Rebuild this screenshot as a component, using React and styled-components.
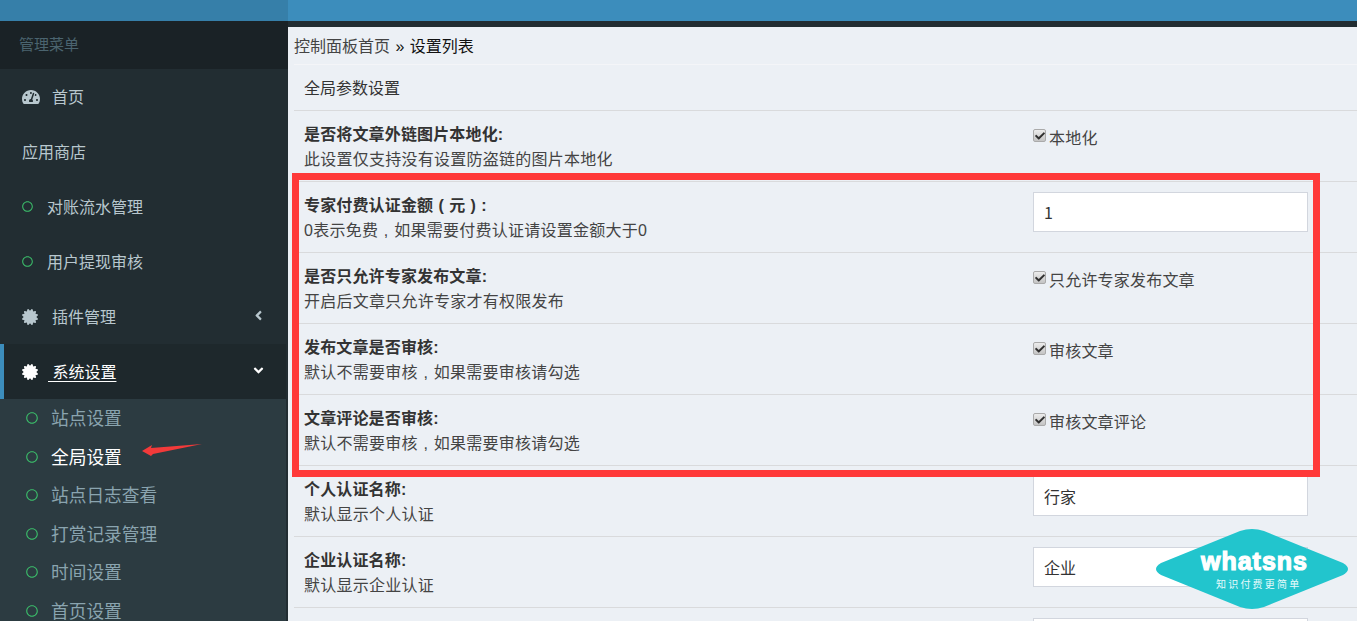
import React from "react";
import styled, { createGlobalStyle } from "styled-components";
import { FaTachometerAlt, FaCertificate, FaRegCircle, FaAngleLeft, FaAngleDown, FaCheck } from "react-icons/fa";

const FONT = `"Liberation Sans", "Noto Sans CJK SC", sans-serif`;

const Global = createGlobalStyle`
  html, body { margin: 0; padding: 0; height: 621px; overflow: hidden; background: #ecf0f5; }
  * { box-sizing: border-box; }
  body { font-family: ${FONT}; font-size: 16px; color: #333; }
`;

const Page = styled.div`
  position: relative;
  display: grid;
  grid-template-columns: 288px 1fr;
  width: 1357px;
  height: 621px;
  overflow: hidden;
`;

const Sidebar = styled.aside`
  background: #222d32;
  height: 621px;
  overflow: hidden;
`;
const Brand = styled.div`
  height: 21px;
  background: #367fa9;
`;
const MenuHeader = styled.div`
  height: 48px;
  background: #1a2226;
  color: #4b646f;
  font-size: 15px;
  line-height: 48px;
  padding-left: 19px;
`;
const MenuItem = styled.div`
  display: flex;
  align-items: center;
  height: 55px;
  padding-left: ${p => p.$pad || 22}px;
  padding-right: ${p => (p.$active ? 12 : 14)}px;
  color: ${p => (p.$active ? "#fff" : "#b8c7ce")};
  background: ${p => (p.$active ? "#1e282c" : "transparent")};
  border-left: ${p => (p.$active ? "4px solid #3c8dbc" : "none")};
  width: ${p => (p.$active ? "286px" : "100%")};
  font-size: 16px;
`;
const Glyph = styled.span`
  display: inline-flex;
  width: ${p => p.$w || 30}px;
  flex: none;
  font-size: ${p => p.$size || 16}px;
  color: ${p => p.$color || "inherit"};
`;
const MenuLabel = styled.span`
  flex: 1;
  margin-top: -2px;
  text-decoration: ${p => (p.$underline ? "underline" : "none")};
  text-underline-offset: 3px;
  white-space: pre;
`;
const Caret = styled.span`
  display: inline-flex;
  font-size: 15px;
  margin-top: -3px;
  margin-right: 8px;
`;
const Submenu = styled.div`
  background: #2c3b41;
  width: 286px;
  padding-left: 1px;
`;
const SubItem = styled.div`
  display: flex;
  align-items: center;
  height: 38.5px;
  padding-left: 25px;
  font-size: 17.7px;
  color: ${p => (p.$active ? "#fff" : "#8aa4af")};
`;
const SubLabel = styled.span`
  margin-top: -2px;
`;

const Main = styled.main`
  display: flex;
  flex-direction: column;
  background: #ecf0f5;
  min-width: 0;
`;
const TopBar = styled.div`
  height: 21px;
  background: #3c8dbc;
  flex: none;
`;
const TopEdge = styled.div`
  height: 6px;
  background: #222d32;
  flex: none;
`;
const Breadcrumb = styled.div`
  height: 38px;
  margin-left: 6px;
  flex: none;
  font-size: 16px;
  line-height: 40px;
  color: #111;
  border-bottom: 1px solid #f4f5f8;
`;
const CrumbLink = styled.span`
  color: #444;
`;
const CrumbSep = styled.span`
  margin: 0 1px;
`;
const SectionTitle = styled.div`
  height: 46px;
  margin-left: 6px;
  padding-left: 10px;
  flex: none;
  font-size: 16px;
  line-height: 47px;
  color: #333;
  border-bottom: 1px solid #d9dadc;
`;
const Row = styled.div`
  display: grid;
  grid-template-columns: 729px 275px;
  flex: none;
  height: 71px;
  margin-left: 6px;
  padding-left: 10px;
  border-bottom: 1px solid #d9dadc;
`;
const Info = styled.div`
  padding-top: 11px;
`;
const Title = styled.div`
  font-size: 16px;
  line-height: 25px;
  font-weight: 700;
  color: #333;
  letter-spacing: 0.15px;
`;
const Hint = styled.div`
  font-size: 16px;
  line-height: 25px;
  color: #444;
  letter-spacing: 0.25px;
`;
const Cell = styled.span`
  display: inline-block;
  width: 1em;
  text-align: center;
`;
const Control = styled.div`
  padding-top: 10px;
`;
const TextInput = styled.input`
  display: block;
  width: 275px;
  height: 40px;
  padding: 0 10px;
  background: #fff;
  border: 1px solid #d2d6de;
  border-radius: 0;
  outline: none;
  font-family: "Noto Sans CJK SC", "Liberation Sans", sans-serif;
  font-size: 16px;
  color: #333;
`;
const CheckLabel = styled.label`
  display: flex;
  align-items: flex-start;
  padding-top: 6px;
  font-size: 16px;
  line-height: 24px;
  color: #444;
  letter-spacing: 0.2px;
`;
const Box = styled.span`
  display: inline-flex;
  align-items: center;
  justify-content: center;
  width: 13px;
  height: 13px;
  margin: 2px 3px 0 0;
  border: 1px solid #aaa;
  border-radius: 2px;
  background: linear-gradient(#ececec, #c4c4c4);
  color: #2f2f2f;
  font-size: 10px;
`;

const Annotation = styled.div`
  position: absolute;
  left: 292px;
  top: 173px;
  width: 1028px;
  height: 304px;
  border: 7px solid #ff3939;
  pointer-events: none;
`;
const ArrowMark = styled.svg`
  position: absolute;
  left: 140px;
  top: 442px;
  width: 64px;
  height: 16px;
`;
const Logo = styled.svg`
  position: absolute;
  left: 1150px;
  top: 525px;
  width: 204px;
  height: 90px;
`;

const Check = ({ children }) => (
  <CheckLabel>
    <Box><FaCheck /></Box>
    {children}
  </CheckLabel>
);

const rows = [
  ["是否将文章外链图片本地化:", "此设置仅支持没有设置防盗链的图片本地化", { check: "本地化" }],
  [<>专家付费认证金额<Cell>(</Cell>元<Cell>)</Cell>:</>, <>0表示免费<Cell>,</Cell>如果需要付费认证请设置金额大于0</>, { input: "1" }],
  ["是否只允许专家发布文章:", "开启后文章只允许专家才有权限发布", { check: "只允许专家发布文章" }],
  ["发布文章是否审核:", <>默认不需要审核<Cell>,</Cell>如果需要审核请勾选</>, { check: "审核文章" }],
  ["文章评论是否审核:", <>默认不需要审核<Cell>,</Cell>如果需要审核请勾选</>, { check: "审核文章评论" }],
  ["个人认证名称:", "默认显示个人认证", { input: "行家" }],
  ["企业认证名称:", "默认显示企业认证", { input: "企业" }],
  ["", "", { input: "" }],
];

const subItems = ["站点设置", "全局设置", "站点日志查看", "打赏记录管理", "时间设置", "首页设置"];

export default function App() {
  return (
    <Page>
      <Global />
      <Sidebar>
        <Brand />
        <MenuHeader>管理菜单</MenuHeader>
        <MenuItem>
          <Glyph $size={18}><FaTachometerAlt /></Glyph>
          <MenuLabel>首页</MenuLabel>
        </MenuItem>
        <MenuItem><MenuLabel>应用商店</MenuLabel></MenuItem>
        <MenuItem>
          <Glyph $w={25} $size={11} $color="#3bbd6a"><FaRegCircle /></Glyph>
          <MenuLabel>对账流水管理</MenuLabel>
        </MenuItem>
        <MenuItem>
          <Glyph $w={25} $size={11} $color="#3bbd6a"><FaRegCircle /></Glyph>
          <MenuLabel>用户提现审核</MenuLabel>
        </MenuItem>
        <MenuItem>
          <Glyph><FaCertificate /></Glyph>
          <MenuLabel>插件管理</MenuLabel>
          <Caret><FaAngleLeft /></Caret>
        </MenuItem>
        <MenuItem $active $pad={18}>
          <Glyph $w={26}><FaCertificate /></Glyph>
          <MenuLabel $underline> 系统设置</MenuLabel>
          <Caret><FaAngleDown /></Caret>
        </MenuItem>
        <Submenu>
          {subItems.map((s, i) => (
            <SubItem key={s} $active={i === 1}>
              <Glyph $w={25} $size={12} $color="#3bbd6a"><FaRegCircle /></Glyph>
              <SubLabel>{s}</SubLabel>
            </SubItem>
          ))}
        </Submenu>
      </Sidebar>
      <Main>
        <TopBar />
        <TopEdge />
        <Breadcrumb><CrumbLink>控制面板首页</CrumbLink> <CrumbSep>»</CrumbSep> 设置列表</Breadcrumb>
        <SectionTitle>全局参数设置</SectionTitle>
        {rows.map(([t, h, c], i) => (
          <Row key={i}>
            <Info>
              <Title>{t}</Title>
              <Hint>{h}</Hint>
            </Info>
            <Control>
              {c.input !== undefined
                ? <TextInput readOnly defaultValue={c.input} />
                : <Check>{c.check}</Check>}
            </Control>
          </Row>
        ))}
      </Main>
      <Annotation />
      <ArrowMark viewBox="0 0 64 16">
        <path d="M2 9 L12 3 L11 6 L62 2 L13 12 L11 14 Z" fill="#f23a3a" />
      </ArrowMark>
      <Logo viewBox="0 0 204 90">
        <path d="M90 6 Q102 2 114 6 L193 38 Q203 44 193 50 L114 82 Q102 86 90 82 L11 50 Q1 44 11 38 Z" fill="#22c5cd" />
        <text x="51" y="45" fontFamily='"Liberation Sans", sans-serif' fontWeight="700" fontSize="25" fill="#fff" stroke="#fff" strokeWidth="1.2" textLength="106">whatsns</text>
        <text x="66" y="63" fontFamily='"Noto Sans CJK SC", sans-serif' fontSize="10" fill="#e8fbfc" letterSpacing="2.2">知识付费更简单</text>
      </Logo>
    </Page>
  );
}
